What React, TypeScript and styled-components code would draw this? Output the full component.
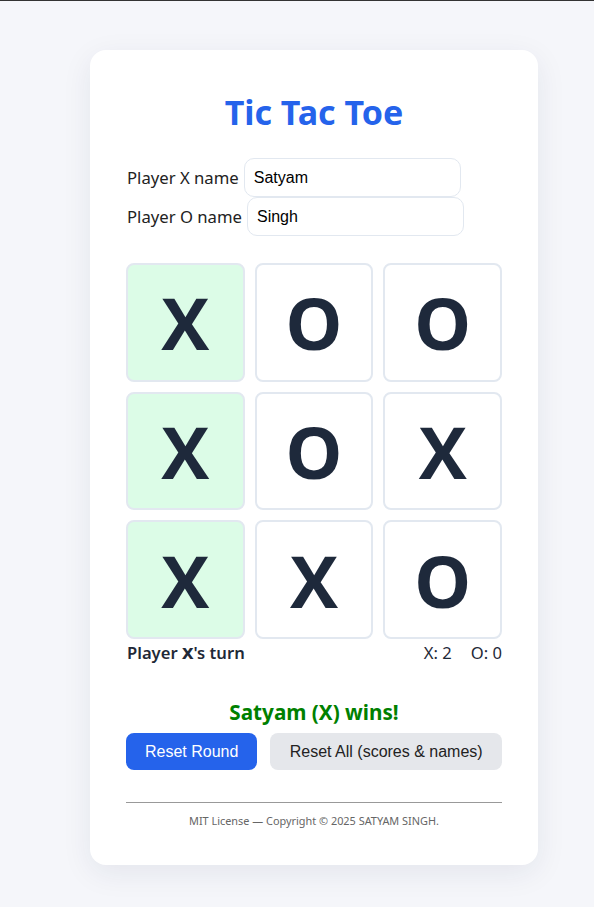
import React from "react";
import styled, { createGlobalStyle } from "styled-components";

const Global = createGlobalStyle`
  html, body { margin: 0; padding: 0; }
  html { border-top: 1px solid #333; }
  body {
    background: #f5f6fa;
    font-family: "Noto Sans", "Open Sans", sans-serif;
    color: #1f2937;
  }
`;

const Page = styled.div`
  display: flex;
  padding: 49px 0 40px 90px;
`;

const Card = styled.div`
  width: 448px;
  box-sizing: border-box;
  background: #fff;
  border-radius: 16px;
  box-shadow: 0 8px 30px rgba(30, 41, 80, 0.08);
  padding: 36px 36px 37px;
`;

const Title = styled.h1`
  margin: 0 0 20px;
  text-align: center;
  color: #2563eb;
  font-size: 34px;
  font-weight: 700;
  line-height: 52px;
`;

const NameRow = styled.label`
  display: flex;
  align-items: center;
  gap: 5px;
  padding-left: 1px;
  font-size: 16.7px;
  color: #222;
  height: 39px;
`;

const NameInput = styled.input`
  width: 217px;
  height: 39px;
  box-sizing: border-box;
  border: 1px solid #e2e8f0;
  border-radius: 10px;
  padding: 0 9px;
  font-family: "Liberation Sans", Arial, sans-serif;
  font-size: 16px;
  color: #000;
  outline: none;
`;

const Board = styled.div`
  display: grid;
  grid-template-columns: repeat(3, 1fr);
  gap: 10px;
  margin-top: 27px;
`;

const Cell = styled.button<{ $win?: boolean }>`
  aspect-ratio: 1;
  box-sizing: border-box;
  border: 2px solid #e2e8f0;
  border-radius: 8px;
  background: ${(p) => (p.$win ? "#dcfce7" : "#fff")};
  color: #1e293b;
  font-family: "Open Sans", "Noto Sans", sans-serif;
  font-size: 72px;
  font-weight: 700;
  display: flex;
  align-items: center;
  justify-content: center;
  padding: 0;
  cursor: pointer;
`;

const StatusRow = styled.div`
  display: flex;
  justify-content: space-between;
  align-items: center;
  margin-top: 3px;
  padding-left: 1px;
  font-size: 16.6px;
  line-height: 22px;
`;

const Turn = styled.div`
  font-weight: 600;
  strong { font-weight: 800; }
`;

const Scores = styled.div`
  display: flex;
  gap: 19px;
`;

const Winner = styled.div`
  text-align: center;
  color: #008000;
  font-weight: 700;
  font-size: 20.7px;
  margin-top: 34px;
  line-height: 28px;
`;

const Buttons = styled.div`
  display: flex;
  gap: 13px;
  margin-top: 7px;
`;

const Btn = styled.button<{ $primary?: boolean }>`
  height: 37px;
  border: none;
  border-radius: 8px;
  font-family: "Liberation Sans", Arial, sans-serif;
  font-size: 16px;
  padding: 0 19px;
  background: ${(p) => (p.$primary ? "#2563eb" : "#e5e7eb")};
  color: ${(p) => (p.$primary ? "#fff" : "#222")};
  cursor: pointer;
  flex: ${(p) => (p.$primary ? "0 0 auto" : "1")};
`;

const Rule = styled.hr`
  margin: 32px 0 0;
  border: none;
  border-top: 1px solid #999;
`;

const Footer = styled.footer`
  text-align: center;
  font-size: 10.9px;
  color: #666;
  margin-top: 10px;
`;

const board = ["X", "O", "O", "X", "O", "X", "X", "X", "O"];
const winning = [0, 3, 6];

export default function App() {
  return (
    <>
      <Global />
      <Page>
        <Card>
          <Title>Tic Tac Toe</Title>
          <NameRow>
            Player X name <NameInput defaultValue="Satyam" />
          </NameRow>
          <NameRow>
            Player O name <NameInput defaultValue="Singh" />
          </NameRow>
          <Board>
            {board.map((v, i) => (
              <Cell key={i} $win={winning.includes(i)}>
                {v}
              </Cell>
            ))}
          </Board>
          <StatusRow>
            <Turn>
              Player <strong>X</strong>'s turn
            </Turn>
            <Scores>
              <span>X: 2</span>
              <span>O: 0</span>
            </Scores>
          </StatusRow>
          <Winner>Satyam (X) wins!</Winner>
          <Buttons>
            <Btn $primary>Reset Round</Btn>
            <Btn>Reset All (scores &amp; names)</Btn>
          </Buttons>
          <Rule />
          <Footer>MIT License — Copyright © 2025 SATYAM SINGH.</Footer>
        </Card>
      </Page>
    </>
  );
}
